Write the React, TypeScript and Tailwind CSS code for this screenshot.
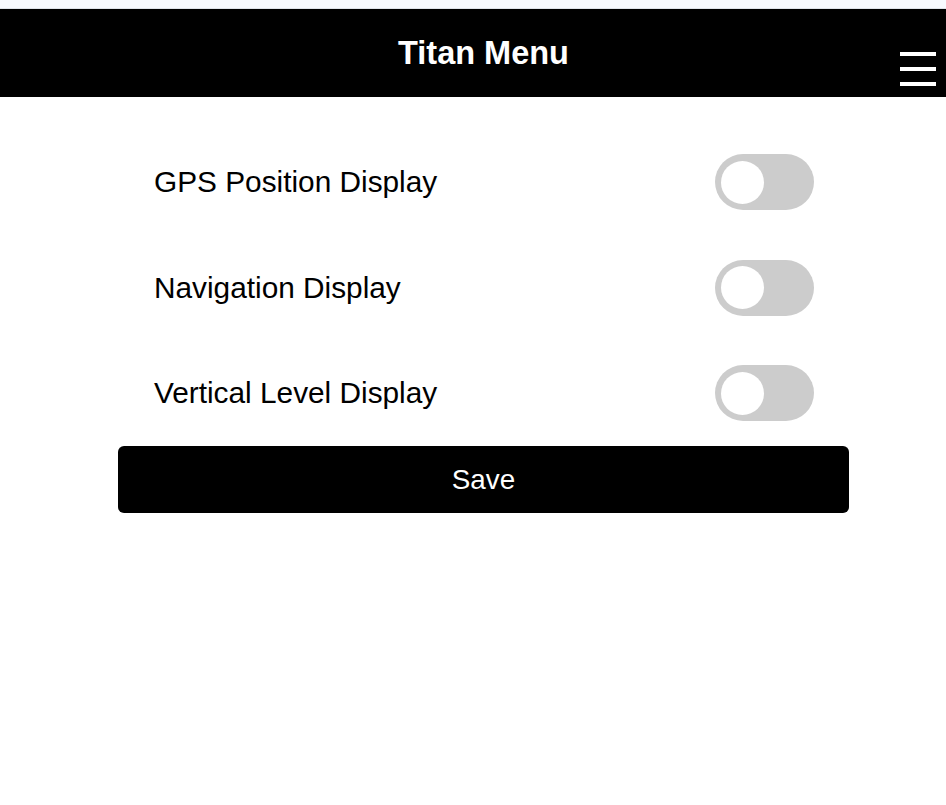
import React from "react";

const Toggle = () => (
  <div className="w-[99px] h-[56px] rounded-full bg-[#cccccc] flex items-center pl-[6.5px]">
    <div className="w-[43px] h-[43px] rounded-full bg-white" />
  </div>
);

export default function App() {
  const items = ["GPS Position Display", "Navigation Display", "Vertical Level Display"];
  return (
    <div className="w-[946px] h-[805px] bg-white overflow-hidden" style={{ fontFamily: '"Liberation Sans", Arial, sans-serif' }}>
      <div className="h-[8px] bg-[#f8faff] border-b border-[#dfe3ea] box-content" />
      <div className="relative h-[88px] bg-black flex items-center justify-center pl-[21px]">
        <h1 className="text-white font-bold text-[32.5px] leading-none">Titan Menu</h1>
        <div className="absolute left-[900px] top-[43px] flex flex-col gap-[11px]">
          <span className="block w-[36px] h-[4px] bg-white" />
          <span className="block w-[36px] h-[4px] bg-white" />
          <span className="block w-[36px] h-[4px] bg-white" />
        </div>
      </div>
      <div className="ml-[118px] w-[731px] pt-[57px]">
        <div className="flex flex-col gap-[49.5px] pl-[36px] pr-[35.5px]">
          {items.map((t) => (
            <div key={t} className="h-[56px] flex items-center justify-between">
              <span className="text-[29.8px] text-black leading-none">{t}</span>
              <Toggle />
            </div>
          ))}
        </div>
        <button className="mt-[25px] w-[731px] h-[67px] bg-black text-white rounded-[6px] text-[27.8px] flex items-center justify-center">
          Save
        </button>
      </div>
    </div>
  );
}
